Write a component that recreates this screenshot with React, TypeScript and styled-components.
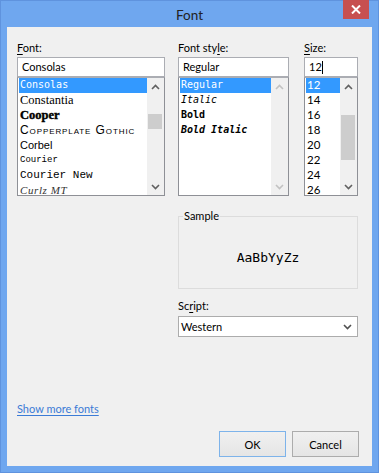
import React from "react";
import styled, { createGlobalStyle, css } from "styled-components";

const GlobalStyle = createGlobalStyle`
  html, body { margin: 0; padding: 0; }
  body {
    width: 379px;
    height: 473px;
    overflow: hidden;
    font-family: Lato, "Noto Sans", sans-serif;
    font-size: 11px;
    color: #000;
  }
  * { box-sizing: border-box; }
`;

const Window = styled.div`
  width: 379px;
  height: 473px;
  border: 1px solid #5f93de;
  background: #6fa7ef;
  display: flex;
  flex-direction: column;
  padding: 0 6px 6px 6px;
`;

const TitleBar = styled.div`
  height: 26px;
  display: grid;
  grid-template-columns: 1fr auto 1fr;
  margin-right: 3px;
`;

const Title = styled.div`
  grid-column: 2;
  align-self: center;
  font-size: 13.5px;
  color: #222;
  line-height: 18px;
  margin-top: 2px;
  margin-left: 3px;
`;

const CloseButton = styled.div`
  grid-column: 3;
  justify-self: end;
  align-self: start;
  width: 26px;
  height: 19px;
  margin-top: -1px;
  background: #c75050;
  display: flex;
  align-items: center;
  justify-content: center;
`;

const Client = styled.div`
  flex: 1;
  background: #f0f0f0;
  display: flex;
  flex-direction: column;
  padding: 13px 14px 9px 10px;
`;

const TopRow = styled.div`
  display: flex;
`;

const Column = styled.div<{ $w: number; $mr?: number }>`
  width: ${(p) => p.$w}px;
  margin-right: ${(p) => p.$mr ?? 0}px;
  display: flex;
  flex-direction: column;
`;

const Label = styled.div`
  height: 16px;
  line-height: 16px;
  margin-bottom: 1px;
  white-space: nowrap;
  u { text-decoration: underline; text-underline-offset: 2px; }
`;

const TextBox = styled.div`
  height: 20px;
  border: 1px solid #abadb3;
  background: #fff;
  padding: 0 4px;
  line-height: 18px;
  white-space: nowrap;
  display: flex;
  align-items: center;
`;

const Caret = styled.span`
  display: inline-block;
  width: 1px;
  height: 13px;
  background: #000;
  margin-left: 0px;
`;

const ListBox = styled.div`
  height: 119px;
  border: 1px solid #8e9096;
  border-top-color: #abadb3;
  background: #fff;
  display: flex;
  overflow: hidden;
`;

const Items = styled.div`
  flex: 1;
  padding: 0 0 0 1px;
  overflow: hidden;
`;

const faces = {
  consolas: css`font-family: "DejaVu Sans Mono", monospace; font-size: 10px;`,
  constantia: css`font-family: "Liberation Serif", serif; font-size: 12.5px;`,
  cooper: css`font-family: "Liberation Serif", serif; font-size: 12.5px; font-weight: 900; -webkit-text-stroke: 0.4px #000;`,
  copperplate: css`font-family: "Liberation Sans", sans-serif; font-size: 12px; font-variant: small-caps; letter-spacing: 0.9px;`,
  corbel: css`font-family: "Liberation Sans", sans-serif; font-size: 11px;`,
  courier: css`font-family: "Liberation Mono", monospace; font-size: 9px;`,
  couriernew: css`font-family: "Liberation Mono", monospace; font-size: 11px;`,
  curlz: css`font-family: "Liberation Serif", serif; font-size: 11px; font-style: italic; letter-spacing: 0.6px; color: #333;`,
  ui: css`font-family: Lato, "Noto Sans", sans-serif; font-size: 11.5px;`,
  mono: css`font-family: "DejaVu Sans Mono", monospace; font-size: 10px;`,
  monoItalic: css`font-family: "DejaVu Sans Mono", monospace; font-size: 10px; font-style: italic;`,
  monoBold: css`font-family: "DejaVu Sans Mono", monospace; font-size: 10px; font-weight: bold;`,
  monoBoldItalic: css`font-family: "DejaVu Sans Mono", monospace; font-size: 10px; font-weight: bold; font-style: italic;`,
};

type Face = keyof typeof faces;

const Row = styled.div<{ $face: Face; $selected?: boolean }>`
  height: 15px;
  line-height: 14px;
  padding-left: 1px;
  white-space: nowrap;
  overflow: hidden;
  ${(p) => faces[p.$face]}
  ${(p) =>
    p.$selected &&
    css`
      background: #3399ff;
      color: #fff;
      -webkit-text-stroke: 0;
    `}
`;

const ScrollBar = styled.div`
  width: 17px;
  background: #f0f0f0;
  display: flex;
  flex-direction: column;
`;

const ArrowButton = styled.div`
  height: 17px;
  display: flex;
  align-items: center;
  justify-content: center;
`;

const Track = styled.div`
  flex: 1;
  display: flex;
  flex-direction: column;
`;

const Thumb = styled.div<{ $top: number; $h: number }>`
  margin: ${(p) => p.$top}px 2px 0 1px;
  height: ${(p) => p.$h}px;
  background: #cdcdcd;
`;

const Chevron = ({ up, color }: { up?: boolean; color: string }) => (
  <svg width="9" height="6" viewBox="0 0 9 6">
    <polyline
      points={up ? "1,5 4.5,1.5 8,5" : "1,1 4.5,4.5 8,1"}
      fill="none"
      stroke={color}
      strokeWidth="1.6"
    />
  </svg>
);

const Lower = styled.div`
  margin-left: 161px;
  width: 180px;
  display: flex;
  flex-direction: column;
`;

const SampleGroup = styled.fieldset`
  margin: 13px 0 0 0;
  padding: 0;
  border: 1px solid #dcdcdc;
  min-width: 0;
`;

const Legend = styled.legend`
  margin-left: 4px;
  padding: 0 1px;
  line-height: 14px;
  font-size: 11px;
`;

const SampleText = styled.div`
  height: 65px;
  display: flex;
  align-items: center;
  justify-content: center;
  font-family: "DejaVu Sans Mono", monospace;
  font-size: 13px;
  padding-top: 3px;
`;

const ScriptLabel = styled(Label)`
  margin-top: 9px;
  margin-bottom: 2px;
`;

const Select = styled.div`
  height: 21px;
  border: 1px solid #acacac;
  background: #fff;
  display: flex;
  align-items: center;
  justify-content: space-between;
  padding: 0 5px 0 2px;
`;

const Footer = styled.div`
  margin-top: auto;
  display: flex;
  flex-direction: column;
`;

const Link = styled.a`
  align-self: flex-start;
  height: 16px;
  line-height: 16px;
  color: #3b7bd6;
  text-decoration: underline;
  text-underline-offset: 2px;
  margin-bottom: 14px;
  cursor: pointer;
`;

const Buttons = styled.div`
  display: flex;
  justify-content: flex-end;
  gap: 6px;
  margin-right: -1px;
`;

const Button = styled.button<{ $default?: boolean }>`
  width: 67px;
  height: 26px;
  border: 1px solid ${(p) => (p.$default ? "#7db3ea" : "#acacac")};
  background: linear-gradient(#f0f0f0, #e5e5e5);
  font-family: Lato, "Noto Sans", sans-serif;
  font-size: 11px;
  color: #000;
  padding: 0;
`;

const fonts: { name: string; face: Face }[] = [
  { name: "Consolas", face: "consolas" },
  { name: "Constantia", face: "constantia" },
  { name: "Cooper", face: "cooper" },
  { name: "Copperplate Gothic", face: "copperplate" },
  { name: "Corbel", face: "corbel" },
  { name: "Courier", face: "courier" },
  { name: "Courier New", face: "couriernew" },
  { name: "Curlz MT", face: "curlz" },
];

const styles: { name: string; face: Face }[] = [
  { name: "Regular", face: "mono" },
  { name: "Italic", face: "monoItalic" },
  { name: "Bold", face: "monoBold" },
  { name: "Bold Italic", face: "monoBoldItalic" },
];

const sizes = ["12", "14", "16", "18", "20", "22", "24", "26"];

const Scroll = ({
  thumb,
  disabled,
}: {
  thumb?: { top: number; h: number };
  disabled?: boolean;
}) => {
  const c = disabled ? "#c2c2c2" : "#606060";
  return (
    <ScrollBar>
      <ArrowButton>
        <Chevron up color={c} />
      </ArrowButton>
      <Track>{thumb && <Thumb $top={thumb.top} $h={thumb.h} />}</Track>
      <ArrowButton>
        <Chevron color={c} />
      </ArrowButton>
    </ScrollBar>
  );
};

export default function App() {
  return (
    <>
      <GlobalStyle />
      <Window>
        <TitleBar>
          <Title>Font</Title>
          <CloseButton>
            <svg width="10" height="9" viewBox="0 0 10 9">
              <path d="M1 0.5 L9 8.5 M9 0.5 L1 8.5" stroke="#fff" strokeWidth="2" />
            </svg>
          </CloseButton>
        </TitleBar>
        <Client>
          <TopRow>
            <Column $w={148} $mr={13}>
              <Label>
                <u>F</u>ont:
              </Label>
              <TextBox>Consolas</TextBox>
              <ListBox>
                <Items>
                  {fonts.map((f, i) => (
                    <Row key={f.name} $face={f.face} $selected={i === 0}>
                      {f.name}
                    </Row>
                  ))}
                </Items>
                <Scroll thumb={{ top: 19, h: 15 }} />
              </ListBox>
            </Column>
            <Column $w={111} $mr={15}>
              <Label>
                Font sty<u>l</u>e:
              </Label>
              <TextBox>Regular</TextBox>
              <ListBox>
                <Items>
                  {styles.map((s, i) => (
                    <Row key={s.name} $face={s.face} $selected={i === 0}>
                      {s.name}
                    </Row>
                  ))}
                </Items>
                <Scroll disabled />
              </ListBox>
            </Column>
            <Column $w={54}>
              <Label>
                <u>S</u>ize:
              </Label>
              <TextBox>
                12
                <Caret />
              </TextBox>
              <ListBox>
                <Items>
                  {sizes.map((s, i) => (
                    <Row key={s} $face="ui" $selected={i === 0}>
                      {s}
                    </Row>
                  ))}
                </Items>
                <Scroll thumb={{ top: 20, h: 45 }} />
              </ListBox>
            </Column>
          </TopRow>
          <Lower>
            <SampleGroup>
              <Legend>Sample</Legend>
              <SampleText>AaBbYyZz</SampleText>
            </SampleGroup>
            <ScriptLabel>
              Sc<u>r</u>ipt:
            </ScriptLabel>
            <Select>
              <span>Western</span>
              <Chevron color="#505050" />
            </Select>
          </Lower>
          <Footer>
            <Link>Show more fonts</Link>
            <Buttons>
              <Button $default>OK</Button>
              <Button>Cancel</Button>
            </Buttons>
          </Footer>
        </Client>
      </Window>
    </>
  );
}
